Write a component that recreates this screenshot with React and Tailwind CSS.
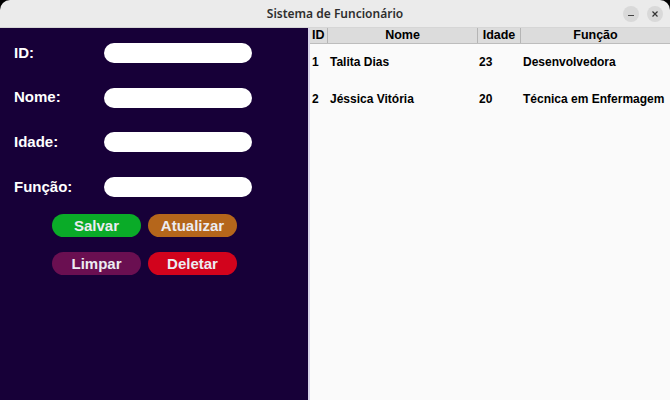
import React from 'react';

const fields = ['ID:', 'Nome:', 'Idade:', 'Função:'];

const rows = [
  { id: 1, nome: 'Talita Dias', idade: 23, funcao: 'Desenvolvedora' },
  { id: 2, nome: 'Jéssica Vitória', idade: 20, funcao: 'Técnica em Enfermagem' },
];

const Btn = ({ label, color }) => (
  <button className={`w-[89px] h-[23px] rounded-full text-[15px] font-bold leading-none text-[#ececf2] ${color}`}>
    {label}
  </button>
);

const App = () => {
  return (
    <div className="w-[670px] h-[400px] bg-black overflow-hidden font-['Liberation_Sans',Arial,sans-serif]">
      <div className="w-full h-full flex flex-col rounded-t-[10px] overflow-hidden bg-[#ebebeb]">
        {/* Title bar */}
        <div className="relative h-[28px] shrink-0 flex items-center justify-center border-b border-[#d6d6d6]">
          <span className="text-[12px] font-semibold text-[#2e2e2e] font-['Noto_Sans',sans-serif]">
            Sistema de Funcionário
          </span>
          <div className="absolute right-[7px] top-[6px] flex gap-[8px]">
            <div className="w-[16px] h-[16px] rounded-full bg-[#d9d9d9] flex items-center justify-center">
              <div className="w-[6px] h-[1px] bg-[#444] mt-[3px]"></div>
            </div>
            <div className="w-[16px] h-[16px] rounded-full bg-[#d9d9d9] flex items-center justify-center">
              <svg width="8" height="8" viewBox="0 0 8 8">
                <path d="M1.5 1.5l5 5M6.5 1.5l-5 5" stroke="#333" strokeWidth="1.2" />
              </svg>
            </div>
          </div>
        </div>

        <div className="flex flex-1 min-h-0">
          {/* Form panel */}
          <div className="w-[308px] shrink-0 bg-[#170038] pl-[14px] pt-[15px]">
            <div className="flex flex-col gap-[24.7px]">
              {fields.map((f) => (
                <div key={f} className="flex items-center h-[20px]">
                  <span className="w-[90px] text-[15px] font-bold text-white">{f}</span>
                  <div className="w-[148px] h-[20px] rounded-full bg-white"></div>
                </div>
              ))}
            </div>
            <div className="ml-[38px] mt-[17px] grid grid-cols-[89px_89px] gap-x-[7px] gap-y-[15px]">
              <Btn label="Salvar" color="bg-[#0aab28]" />
              <Btn label="Atualizar" color="bg-[#b5661b]" />
              <Btn label="Limpar" color="bg-[#6a0f51]" />
              <Btn label="Deletar" color="bg-[#d2031c]" />
            </div>
          </div>

          <div className="w-[2px] bg-[#d8d2ea]"></div>

          {/* Table */}
          <div className="flex-1 bg-[#fafafa] font-bold text-black">
            <div className="flex h-[16px] bg-[#dcdcdc] border-b border-[#bdbdbd] items-center text-[12.5px]">
              <div className="w-[18px] pl-[2px] border-r border-[#b5b5b5] h-full flex items-center">ID</div>
              <div className="w-[150px] border-r border-[#b5b5b5] h-full flex items-center justify-center">Nome</div>
              <div className="w-[43px] border-r border-[#b5b5b5] h-full flex items-center justify-center">Idade</div>
              <div className="flex-1 h-full flex items-center justify-center">Função</div>
            </div>
            <div className="flex flex-col pt-[10px] gap-[21px] text-[12px]">
              {rows.map((r) => (
                <div key={r.id} className="flex h-[16px] items-center">
                  <div className="w-[20px] pl-[2px]">{r.id}</div>
                  <div className="w-[149px]">{r.nome}</div>
                  <div className="w-[44px]">{r.idade}</div>
                  <div className="flex-1 whitespace-nowrap">{r.funcao}</div>
                </div>
              ))}
            </div>
          </div>
        </div>
      </div>
    </div>
  );
};

export default App;
